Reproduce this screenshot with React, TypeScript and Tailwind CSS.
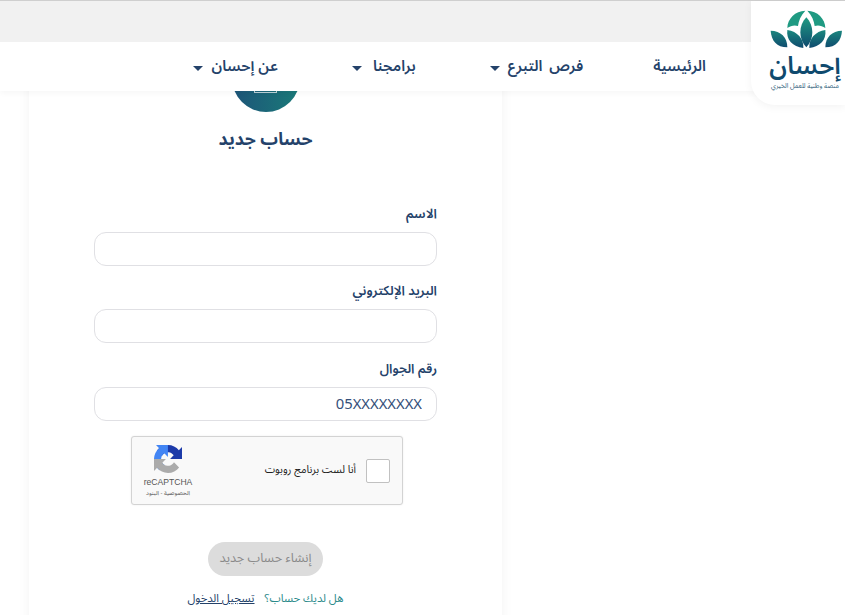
const navy = 'text-[#24426a]'
const font = { fontFamily: '"Noto Sans Arabic", "Noto Sans", "DejaVu Sans", sans-serif' }

const navItems = [
  { label: 'الرئيسية', caret: false, cls: 'gap-[7px]' },
  { label: 'فرص التبرع', caret: true, cls: 'gap-[8px] [word-spacing:3px]' },
  { label: 'برامجنا', caret: true, cls: 'mr-[4px] gap-[11px]' },
  { label: 'عن إحسان', caret: true, cls: 'mr-[4px] gap-[9px] text-[14.5px]' },
]

function Caret() {
  return <span className="mt-[3px] h-0 w-0 border-x-[5px] border-t-[5px] border-x-transparent border-t-[#24426a]" />
}

function Logo() {
  return (
    <div className="absolute right-0 top-px z-20 flex h-[104px] w-[94px] flex-col items-center rounded-bl-[24px] bg-white pl-[14px] pt-[8px] shadow-[0_2px_8px_rgba(0,0,0,0.05)]">
      <svg width="75" height="40" viewBox="200 25 225 120" className="shrink-0">
        <defs>
          <linearGradient id="leaf" x1="0" y1="0" x2="0" y2="1">
            <stop offset="0" stopColor="#1f9a82" />
            <stop offset="1" stopColor="#0f4a6e" />
          </linearGradient>
          <linearGradient id="leafLow" gradientUnits="userSpaceOnUse" x1="0" y1="85" x2="0" y2="142">
            <stop offset="0" stopColor="#1c8c80" />
            <stop offset="1" stopColor="#0f4a6e" />
          </linearGradient>
        </defs>
        <path fill="url(#leaf)" d="M315 50C339 75 339 115 315 140C291 115 291 75 315 50Z" />
        <path fill="#1f9a82" d="M258 82C258 55 282 30 312 30C298 45 292 60 290 76C278 72 268 76 258 82Z" />
        <path fill="#1f9a82" d="M372 82C372 55 348 30 318 30C332 45 338 60 340 76C352 72 362 76 372 82Z" />
        <path fill="url(#leafLow)" d="M258 88C288 92 308 115 306 142C274 138 254 118 258 88Z" />
        <path fill="url(#leafLow)" d="M372 88C342 92 322 115 324 142C356 138 376 118 372 88Z" />
        <path fill="url(#leafLow)" d="M208 90C238 90 258 110 258 140C226 140 210 120 208 90Z" />
        <path fill="url(#leafLow)" d="M422 90C392 90 372 110 372 140C404 140 420 120 422 90Z" />
      </svg>
      <div className="mt-[3px] text-[25px] font-semibold leading-[28px] text-[#0f4a6e]">إحسان</div>
      <div className="mt-[2px] whitespace-nowrap text-[6.5px] leading-[8px] text-[#2b5a78]">منصة وطنية للعمل الخيري</div>
    </div>
  )
}

function Header() {
  return (
    <header className="relative z-10 shadow-[0_2px_6px_rgba(0,0,0,0.04)]">
      <div className="h-[42px] border-t border-[#cfcfcf] bg-[#f1f1f1]" />
      <nav className="flex h-[49px] items-center gap-[70px] bg-white pr-[139px]">
        {navItems.map((item) => (
          <a key={item.label} className={`flex items-center text-[15px] font-semibold ${navy} ${item.cls}`}>
            {item.label}
            {item.caret && <Caret />}
          </a>
        ))}
      </nav>
    </header>
  )
}

function Field({ label, placeholder, gap }: { label: string; placeholder?: string; gap: string }) {
  return (
    <div className={gap}>
      <label className={`mb-[8px] block text-[13px] font-semibold leading-[20px] ${navy}`}>{label}</label>
      <input
        readOnly
        dir="rtl"
        placeholder={placeholder}
        className="h-[34px] w-full rounded-[12px] border border-[#e0e0e4] bg-white px-[14px] text-[14.8px] placeholder:text-[#34507a] focus:outline-none"
      />
    </div>
  )
}

function Recaptcha() {
  return (
    <div dir="ltr" className="mr-[34px] mt-[15px] flex h-[69px] w-[272px] items-center justify-between rounded-[3px] border border-[#d3d3d3] bg-[#f9f9f9] pl-[10px] pr-[12px] shadow-[0_0_2px_rgba(0,0,0,0.08)]">
      <div className="flex w-[52px] flex-col items-center pt-[2px]">
        <svg width="28" height="28" viewBox="0 0 64 64">
          <path fill="#1c3aa9" d="M64 31.955l-.033-1.37V4.687l-7.16 7.16C50.948 4.674 42.033.093 32.05.093c-10.4 0-19.622 4.96-25.458 12.64l11.736 11.86a15.55 15.55 0 0 1 4.754-5.334c2.05-1.6 4.952-2.906 8.968-2.906.485 0 .86.057 1.135.163 4.976.393 9.288 3.14 11.828 7.124l-8.307 8.307L64 31.953" />
          <path fill="#4285f4" d="M31.862.094l-1.37.033H4.594l7.16 7.16C4.58 13.147 0 22.06 0 32.046c0 10.4 4.96 19.622 12.64 25.458L24.5 45.768a15.55 15.55 0 0 1-5.334-4.754c-1.6-2.05-2.906-4.952-2.906-8.968 0-.485.057-.86.163-1.135.393-4.976 3.14-9.288 7.124-11.828l8.307 8.307L31.86.094" />
          <path fill="#ababab" d="M.001 32.045l.033 1.37v25.898l7.16-7.16c5.86 7.173 14.774 11.754 24.76 11.754 10.4 0 19.622-4.96 25.458-12.64l-11.736-11.86a15.55 15.55 0 0 1-4.754 5.334c-2.05 1.6-4.952 2.906-8.968 2.906-.485 0-.86-.057-1.135-.163-4.976-.393-9.288-3.14-11.828-7.124l8.307-8.307c-10.522.04-22.4.066-27.295-.005" />
        </svg>
        <div className="mt-[4px] text-[8.6px] leading-[11px] text-[#555]" style={{ fontFamily: '"Liberation Sans", sans-serif' }}>reCAPTCHA</div>
        <div dir="rtl" className="whitespace-nowrap text-[6px] leading-[10px] text-[#555]">الخصوصية - البنود</div>
      </div>
      <div className="flex items-center gap-[10px]">
        <span dir="rtl" className="text-[10.5px] text-[#222]">أنا لست برنامج روبوت</span>
        <span className="h-[24px] w-[24px] rounded-[2px] border border-[#c1c1c1] bg-white" />
      </div>
    </div>
  )
}

export default function App() {
  return (
    <div dir="rtl" style={font} className="relative h-[615px] overflow-hidden bg-white">
      <Header />
      <Logo />
      <main dir="ltr" className="pl-[29px]">
        <section dir="rtl" className="mt-[-47px] h-[620px] w-[473px] bg-white px-[65px] shadow-[0_0_12px_rgba(0,0,0,0.05)]">
          <div className="mx-auto flex h-[68px] w-[68px] items-end justify-center rounded-full bg-gradient-to-l from-[#1a7a78] to-[#1d5478] pb-[19px]">
            <span className="h-[24px] w-[23px] border border-white/70" />
          </div>
          <h1 className={`mt-[14px] text-center text-[17.5px] font-bold leading-[28px] ${navy}`}>حساب جديد</h1>
          <Field label="الاسم" gap="mt-[50px]" />
          <Field label="البريد الإلكتروني" gap="mt-[15px]" />
          <Field label="رقم الجوال" placeholder="05XXXXXXXX" gap="mt-[16px]" />
          <Recaptcha />
          <button type="button" className="mx-auto mt-[37px] block h-[34px] w-[115px] rounded-full bg-[#dcdcdc] text-[12.7px] text-[#8a8a8a]">
            إنشاء حساب جديد
          </button>
          <p className="mt-[14px] text-center text-[11.3px] text-[#2b8a8a]">
            هل لديك حساب؟
            <a className="mr-[10px] text-[#24426a] underline">تسجيل الدخول</a>
          </p>
        </section>
      </main>
    </div>
  )
}
